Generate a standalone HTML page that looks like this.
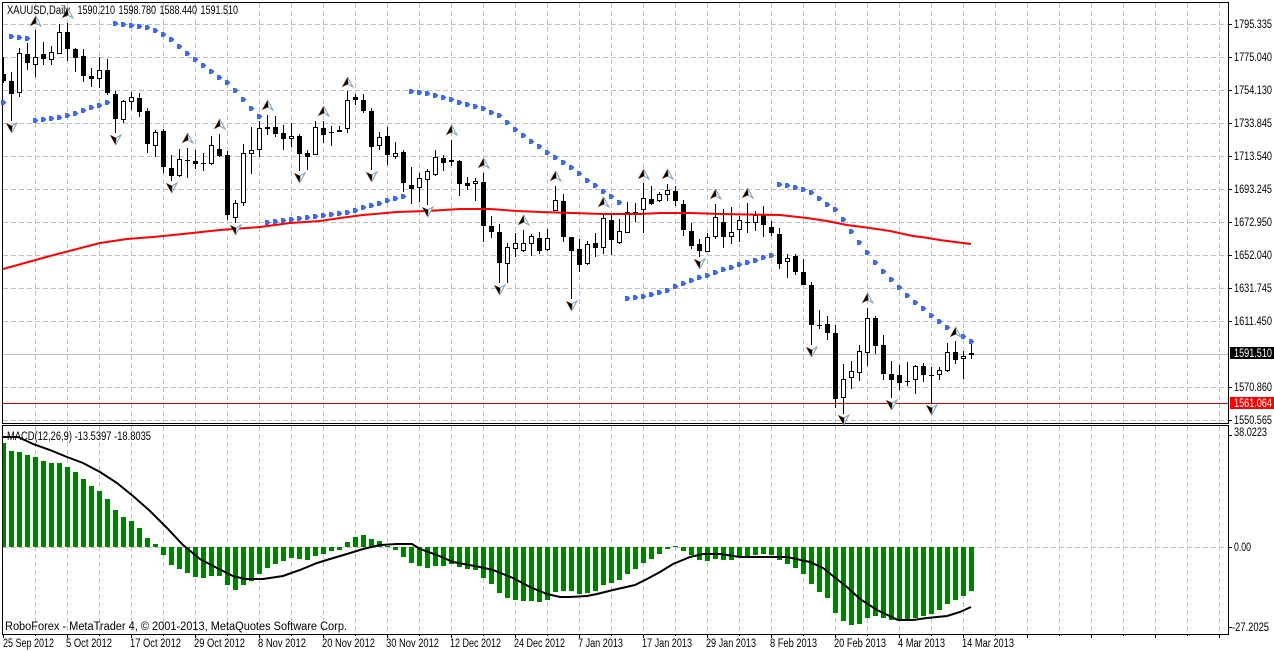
<!DOCTYPE html>
<html><head><meta charset="utf-8"><title>XAUUSD,Daily</title>
<style>
html,body{margin:0;padding:0;background:#fff;width:1274px;height:651px;overflow:hidden}
svg{display:block;position:absolute;left:0;top:0}
text{font-family:"Liberation Sans",Arial,sans-serif;font-size:11.5px;fill:#000}
</style></head><body>
<svg id="c" width="1274" height="651" viewBox="0 0 1274 651" xmlns="http://www.w3.org/2000/svg">
<defs><clipPath id="cp"><rect x="3" y="3" width="1225" height="631"/></clipPath></defs>
<rect width="1274" height="651" fill="#fff"/>
<g id="chart"></g>
<g id="labels">
<text x="7" y="14" textLength="63" lengthAdjust="spacingAndGlyphs">XAUUSD,Daily</text>
<text x="77.5" y="14" textLength="37.5" lengthAdjust="spacingAndGlyphs">1590.210</text>
<text x="118.5" y="14" textLength="37.5" lengthAdjust="spacingAndGlyphs">1598.780</text>
<text x="159.5" y="14" textLength="37.5" lengthAdjust="spacingAndGlyphs">1588.440</text>
<text x="200.5" y="14" textLength="37.5" lengthAdjust="spacingAndGlyphs">1591.510</text>
<text x="7" y="440" textLength="144" lengthAdjust="spacingAndGlyphs">MACD(12,26,9) -13.5397 -18.8035</text>
<text x="5" y="630" textLength="342" lengthAdjust="spacingAndGlyphs">RoboForex - MetaTrader 4, © 2001-2013, MetaQuotes Software Corp.</text>
<text x="1234" y="28" textLength="38" lengthAdjust="spacingAndGlyphs">1795.335</text>
<text x="1234" y="61" textLength="38" lengthAdjust="spacingAndGlyphs">1775.040</text>
<text x="1234" y="94" textLength="38" lengthAdjust="spacingAndGlyphs">1754.130</text>
<text x="1234" y="127" textLength="38" lengthAdjust="spacingAndGlyphs">1733.845</text>
<text x="1234" y="160" textLength="38" lengthAdjust="spacingAndGlyphs">1713.540</text>
<text x="1234" y="193" textLength="38" lengthAdjust="spacingAndGlyphs">1693.245</text>
<text x="1234" y="226" textLength="38" lengthAdjust="spacingAndGlyphs">1672.950</text>
<text x="1234" y="259" textLength="38" lengthAdjust="spacingAndGlyphs">1652.040</text>
<text x="1234" y="292" textLength="38" lengthAdjust="spacingAndGlyphs">1631.745</text>
<text x="1234" y="325" textLength="38" lengthAdjust="spacingAndGlyphs">1611.450</text>
<text x="1234" y="391" textLength="38" lengthAdjust="spacingAndGlyphs">1570.860</text>
<text x="1234" y="424" textLength="38" lengthAdjust="spacingAndGlyphs">1550.565</text>
<rect x="1230" y="347" width="44" height="12" fill="#000"/>
<text x="1234" y="357" textLength="38" lengthAdjust="spacingAndGlyphs" style="fill:#fff">1591.510</text>
<rect x="1230" y="397" width="44" height="12" fill="#f00"/>
<text x="1234" y="407" textLength="38" lengthAdjust="spacingAndGlyphs" style="fill:#fff">1561.064</text>
<text x="1234" y="436" textLength="33" lengthAdjust="spacingAndGlyphs">38.0223</text>
<text x="1234" y="551" textLength="17" lengthAdjust="spacingAndGlyphs">0.00</text>
<text x="1232" y="631" textLength="37" lengthAdjust="spacingAndGlyphs">-27.2025</text>
<text x="3" y="647" textLength="51" lengthAdjust="spacingAndGlyphs">25 Sep 2012</text>
<text x="66" y="647" textLength="46" lengthAdjust="spacingAndGlyphs">5 Oct 2012</text>
<text x="130" y="647" textLength="51" lengthAdjust="spacingAndGlyphs">17 Oct 2012</text>
<text x="194" y="647" textLength="51" lengthAdjust="spacingAndGlyphs">29 Oct 2012</text>
<text x="258" y="647" textLength="48" lengthAdjust="spacingAndGlyphs">8 Nov 2012</text>
<text x="322" y="647" textLength="53" lengthAdjust="spacingAndGlyphs">20 Nov 2012</text>
<text x="386" y="647" textLength="53" lengthAdjust="spacingAndGlyphs">30 Nov 2012</text>
<text x="450" y="647" textLength="51" lengthAdjust="spacingAndGlyphs">12 Dec 2012</text>
<text x="514" y="647" textLength="51" lengthAdjust="spacingAndGlyphs">24 Dec 2012</text>
<text x="578" y="647" textLength="45" lengthAdjust="spacingAndGlyphs">7 Jan 2013</text>
<text x="642" y="647" textLength="50" lengthAdjust="spacingAndGlyphs">17 Jan 2013</text>
<text x="706" y="647" textLength="50" lengthAdjust="spacingAndGlyphs">29 Jan 2013</text>
<text x="770" y="647" textLength="47" lengthAdjust="spacingAndGlyphs">8 Feb 2013</text>
<text x="834" y="647" textLength="52" lengthAdjust="spacingAndGlyphs">20 Feb 2013</text>
<text x="898" y="647" textLength="47" lengthAdjust="spacingAndGlyphs">4 Mar 2013</text>
<text x="962" y="647" textLength="52" lengthAdjust="spacingAndGlyphs">14 Mar 2013</text>
</g>
<g id="marks"></g>
</svg>
<script>
var C=[[57,83,74,81,1],[72,121,81,94,1],[48,97,53,93,0],[43,70,54,63,1],[30,77,57,65,0],[42,65,54,59,1],[46,65,52,60,0],[24,54,32,54,0],[23,61,32,49,1],[48,72,49,58,1],[49,82,56,76,1],[68,87,76,79,1],[57,88,70,79,0],[59,95,70,93,1],[91,133,94,119,1],[100,123,101,120,0],[92,110,97,102,0],[93,117,98,112,1],[108,153,111,144,1],[130,157,132,146,0],[129,173,131,167,1],[155,181,168,176,1],[149,177,159,176,0],[148,178,160,161,1],[150,169,161,164,1],[153,171,163,164,1],[136,165,145,164,0],[134,157,149,156,1],[151,220,155,215,1],[200,223,203,218,0],[144,206,153,203,0],[127,174,150,154,0],[121,157,128,150,0],[115,135,127,129,1],[116,137,127,134,1],[125,150,133,139,1],[123,147,136,139,0],[134,171,136,154,1],[150,170,153,157,1],[121,155,127,155,0],
[121,143,128,135,1],[126,146,132,133,1],[126,132,130,132,1],[91,133,100,129,0],[94,105,97,100,1],[94,113,100,111,1],[108,170,111,147,1],[132,150,137,146,0],[127,165,136,155,1],[142,159,153,157,0],[150,192,152,183,1],[167,204,185,189,1],[173,202,178,188,0],[169,205,171,180,0],[150,176,157,175,0],[155,171,158,163,1],[140,166,160,162,1],[160,196,161,184,1],[177,190,183,186,1],[178,201,181,184,0],[173,242,182,226,1],[216,238,226,232,1],[224,283,232,263,1],[243,283,247,264,0],[233,257,243,249,0],[230,252,243,251,0],[234,256,236,244,0],[232,254,238,251,1],[229,251,238,250,0],[186,211,200,211,0],[194,242,201,237,1],[237,299,237,251,1],[239,272,249,265,1],[241,265,244,264,0],[233,257,243,248,1],[213,254,218,248,0],[215,255,220,240,1],[219,244,231,243,0],[202,233,212,233,0],[203,222,212,213,1],
[183,233,198,210,0],[186,205,199,204,1],[192,202,194,201,0],[184,201,190,195,0],[186,206,191,201,1],[200,236,204,230,1],[223,249,231,246,1],[239,257,244,251,1],[233,252,237,252,0],[204,239,217,237,0],[209,248,222,237,1],[207,244,232,237,0],[216,242,220,230,0],[203,233,222,223,1],[211,231,215,223,0],[206,237,215,225,1],[221,236,227,233,1],[228,269,234,264,1],[254,278,258,262,0],[254,275,256,272,1],[259,285,272,285,1],[282,345,285,325,1],[310,329,325,326,1],[316,340,324,333,1],[325,408,333,399,1],[364,414,379,398,0],[361,389,371,378,0],[345,381,351,373,0],[308,366,318,353,0],[316,354,318,346,1],[335,380,345,374,1],[361,398,374,380,1],[365,390,375,383,1],[362,386,381,382,1],[365,394,366,380,0],[363,382,366,375,1],[367,403,375,376,1],[367,380,370,375,0],[343,372,352,371,0],[341,364,352,360,1],[351,379,356,359,0],[344,359,353,355,0]];
var H=[443,451,452,455,457,461,463,463,467,472,479,486,491,499,510,517,521,528,538,544,555,565,569,573,577,578,576,576,585,590,585,581,574,568,564,561,558,559,560,556,554,551,550,542,537,535,539,541,546,550,557,563,566,568,566,566,564,567,569,570,578,584,593,598,600,601,601,602,600,592,591,591,594,593,591,585,583,580,574,569,563,559,554,549,546,551,555,560,561,559,560,560,557,556,555,554,555,560,564,568,574,584,592,598,613,621,625,624,618,616,618,620,620,620,618,616,614,610,604,600,596,591];
var S=[3,437,18,437,33,444,50,450,67,457,83,463,100,472,117,483,133,496,150,511,167,528,183,545,200,559,217,568,233,576,245,579,263,579,283,576,300,570,317,563,330,559,347,554,363,549,380,545,397,544,412,544,420,549,437,555,453,562,480,567,493,570,513,578,530,587,547,594,560,597,570,597,587,596,597,594,613,590,635,585,647,579,660,572,673,564,690,557,703,554,720,554,740,557,787,557,810,562,823,568,833,576,847,587,860,599,877,610,898,620,913,620,927,618,947,616,960,612,971,607];
var M=[3,269,50,256,100,243,127,239,153,237,183,234,220,230,260,227,290,223,320,221,340,218,363,215,397,212,427,211,460,209,490,209,517,211,540,212,573,213,603,214,640,214,660,213,690,213,720,214,780,215,807,218,827,221,847,225,870,228,890,231,913,236,925,237.5,940,240,955,242,971,244];
var D=[3,102,11,36,19,37,27,38,115,23,123,24,131,25,139,26,147,27,155,30,163,34,171,39,179,46,187,53,195,59,203,65,211,71,219,77,227,82,235,90,243,99,251,108,259,116,35,120,43,119,51,118,59,117,67,115,75,113,83,110,91,107,99,105,107,102,267,222,275,221,283,220,291,219,299,218,307,217,315,216,323,215,331,214,339,213,347,212,355,210,363,207,371,205,379,203,387,200,395,198,403,196,411,91,419,92,427,93,435,95,443,97,451,99,459,102,467,104,475,106,483,108,491,112,499,115,507,122,515,129,523,135,531,141,539,146,547,152,555,157,563,162,571,167,579,173,587,180,595,185,603,191,611,196,619,202,627,298,635,297,643,296,651,294,659,292,667,290,675,286,683,283,691,280,699,277,707,275,715,272,723,269,731,267,739,264,747,262,755,260,763,257,771,255,779,184,787,185,795,187,803,189,811,192,819,198,827,204,835,209,843,219,851,231,859,242,867,252,875,262,883,271,891,279,899,287,907,295,915,302,923,308,931,315,939,321,947,327,955,332,963,336,971,341];
var UP=[35,21,67,13,187,138,219,124,267,105,323,111,347,82,451,130,483,163,523,220,555,176,603,202,643,174,667,174,715,194,747,193,867,298,955,332];
var DN=[11,128,115,140,171,188,235,230,299,178,371,177,427,212,499,290,571,306,699,264,811,352,843,420,891,405,931,410];
var o='',i,x,t,b,w='',bk='',wh='',gv='',gh='',tk='',h='';
for(x=35;x<=1219;x+=32){gv+='M'+(x+.5)+' 3V423M'+(x+.5)+' 426V634';}
o+='<path d="'+gv+'" stroke="#c0c0c0" stroke-dasharray="5 3" fill="none" shape-rendering="crispEdges"/>';
[24,57,90,123,156,189,222,255,288,321,387,420].forEach(function(y){gh+='M3 '+(y+.5)+'H1228';tk+='M1228 '+(y+.5)+'H1232';});
o+='<path d="'+gh+'M3 547.5H1228" stroke="#c0c0c0" stroke-dasharray="5 3" fill="none" shape-rendering="crispEdges"/>';
o+='<path d="M3 354.5H1228" stroke="#c0c0c0" fill="none" shape-rendering="crispEdges"/>';
o+='<path d="M3 403.5H1228" stroke="#e00000" fill="none" shape-rendering="crispEdges"/>';
// histogram
for(i=0;i<H.length;i++){x=3+8*i;t=Math.min(H[i],547);b=Math.max(H[i],547);h+='<rect x="'+(x-2)+'" y="'+t+'" width="5" height="'+(b-t)+'"/>';}
o+='<g clip-path="url(#cp)"><g fill="#008000" shape-rendering="crispEdges">'+h+'</g>';
function pts(a){var s='';for(var k=0;k<a.length;k+=2)s+=a[k]+','+a[k+1]+' ';return s;}
o+='<polyline points="'+pts(S)+'" fill="none" stroke="#000" stroke-width="2"/>';
// candles
for(i=0;i<C.length;i++){var c=C[i];x=3+8*i;w+='M'+(x+.5)+' '+c[0]+'V'+c[1];
 if(c[4])bk+='<rect x="'+(x-2)+'" y="'+c[2]+'" width="5" height="'+Math.max(1,c[3]-c[2])+'"/>';
 else wh+='<rect x="'+(x-1.5)+'" y="'+(c[2]+.5)+'" width="4" height="'+Math.max(1,c[3]-c[2]-1)+'"/>';}
o+='<path d="'+w+'" stroke="#000" fill="none" shape-rendering="crispEdges"/>';
o+='<g fill="#000" shape-rendering="crispEdges">'+bk+'</g><g fill="#fff" stroke="#000" shape-rendering="crispEdges">'+wh+'</g>';
o+='<polyline points="'+pts(M)+'" fill="none" stroke="#f00" stroke-width="2"/></g>';
// frame
o+='<path d="M2.5 2.5H1228.5V423.5H2.5ZM2.5 425.5H1228.5V634.5H2.5Z'+tk+'M1228 435.5H1232M1228 547.5H1232M1228 627.5H1232" fill="none" stroke="#000" shape-rendering="crispEdges"/>';
var tks='';for(x=3;x<=1219;x+=32)tks+='M'+(x+.5)+' 634V'+((x-3)%64==0?638:636);
o+='<path d="'+tks+'" stroke="#000" fill="none" shape-rendering="crispEdges"/>';
document.getElementById('chart').innerHTML=o;
var m='',d='';
for(i=0;i<D.length;i+=2){x=D[i];var y=D[i+1]+.5;d+='M'+(x-2)+' '+(y-2.5)+'h3l2.5 2.5-2.5 2.5h-3z';}
m+='<path d="'+d+'" fill="#4169e1"/>';
function arrow(cx,cy,u){var s=u?1:-1;
 return '<path d="M'+cx+' '+(cy-5*s)+'L'+(cx+5.5)+' '+(cy+5*s)+'L'+cx+' '+(cy+2*s)+'Z" fill="#fff" stroke="#6fa3c8" stroke-width="1"/>'+
 '<path d="M'+cx+' '+(cy-5*s)+'L'+(cx-5.5)+' '+(cy+5*s)+'L'+(cx+1)+' '+(cy+2*s)+'Z" fill="#000" stroke="#c08040" stroke-width=".5"/>';}
for(i=0;i<UP.length;i+=2)m+=arrow(UP[i]+.5,UP[i+1],1);
for(i=0;i<DN.length;i+=2)m+=arrow(DN[i]+.5,DN[i+1],0);
document.getElementById('marks').innerHTML=m;
</script>
</body></html>
